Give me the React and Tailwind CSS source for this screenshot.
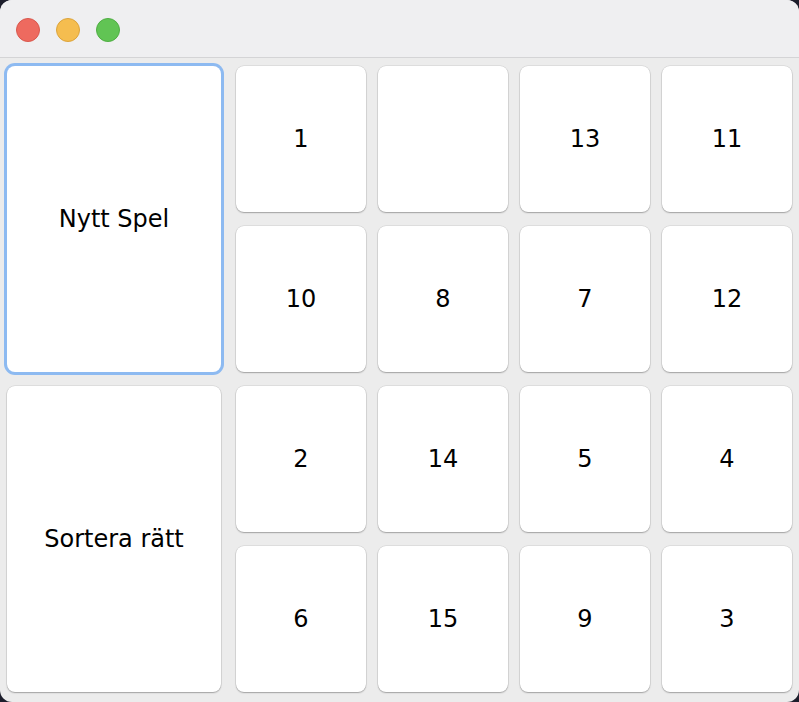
import React from "react";

const tiles = ["1", "", "13", "11", "10", "8", "7", "12", "2", "14", "5", "4", "6", "15", "9", "3"];

const tileCls =
  "bg-white rounded-[8px] flex items-center justify-center text-[24px] text-black shadow-[0_0_0_0.5px_rgba(0,0,0,0.12),0_1px_1.5px_rgba(0,0,0,0.28)]";

export default function App() {
  return (
    <div className="w-[799px] h-[702px] bg-[#1d1e2c] overflow-hidden" style={{ fontFamily: '"DejaVu Sans", sans-serif' }}>
      <div className="w-[799px] h-[702px] rounded-[12px] overflow-hidden bg-[#ececec] flex flex-col">
        <div className="h-[58px] shrink-0 bg-[#efeff1] border-b border-[#d4d4d6] flex items-center pl-[16px] gap-[16px] pt-[2px]">
          <div className="w-[24px] h-[24px] rounded-full bg-[#ee6a5f] border border-[#d9584e]" />
          <div className="w-[24px] h-[24px] rounded-full bg-[#f5bd4f] border border-[#dca43c]" />
          <div className="w-[24px] h-[24px] rounded-full bg-[#61c454] border border-[#4fae43]" />
        </div>
        <div className="flex pt-[8px] pl-[7px]">
          <div className="w-[214px] flex flex-col gap-[14px]">
            <button className={tileCls + " h-[306px] shadow-[0_0_0_3px_#8dbaf1]"}>Nytt Spel</button>
            <button className={tileCls + " h-[306px]"}>Sortera rätt</button>
          </div>
          <div className="ml-[15px] grid grid-cols-[repeat(4,130px)] auto-rows-[146px] gap-x-[12px] gap-y-[14px]">
            {tiles.map((t, i) => (
              <div key={i} className={tileCls}>
                {t}
              </div>
            ))}
          </div>
        </div>
      </div>
    </div>
  );
}
